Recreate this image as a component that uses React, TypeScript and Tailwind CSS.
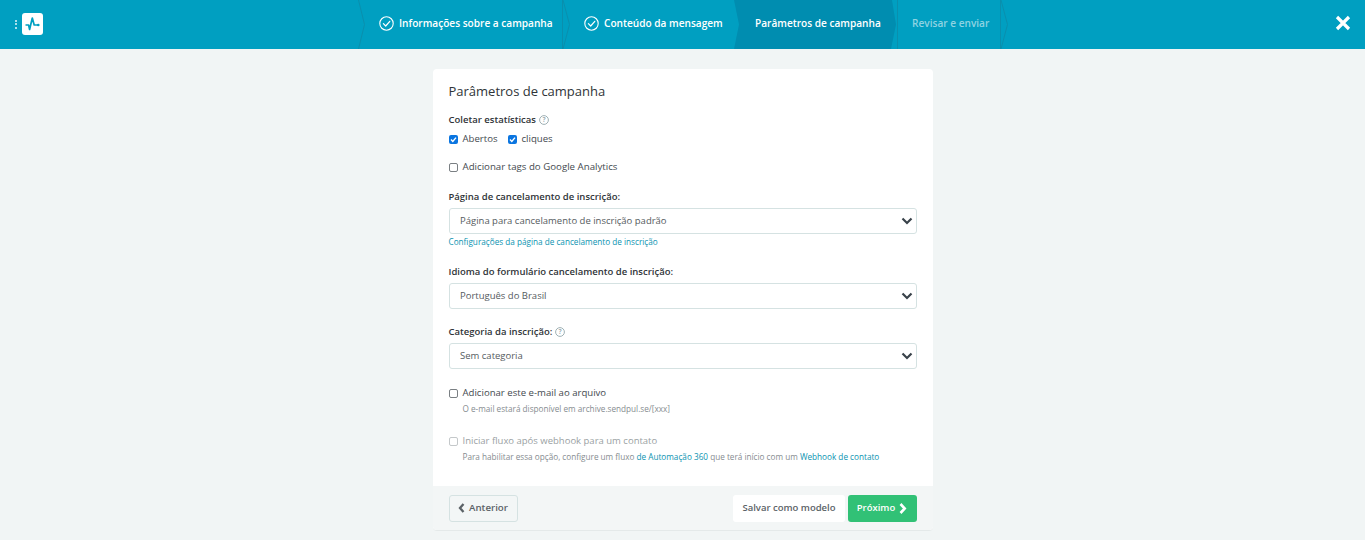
import React from "react";

const font = { fontFamily: '"Open Sans", "Noto Sans", sans-serif' };

function Check() {
  return (
    <svg width="15" height="15" viewBox="0 0 15 15" fill="none" className="shrink-0">
      <circle cx="7.5" cy="7.5" r="6.7" stroke="white" strokeWidth="1.1" />
      <path d="M4.4 7.7 6.7 10 10.8 5.3" stroke="white" strokeWidth="1.2" strokeLinecap="round" strokeLinejoin="round" />
    </svg>
  );
}

function Sep() {
  return (
    <svg width="9" height="49" viewBox="0 0 9 49" fill="none" className="absolute top-0 left-full">
      <path d="M0.5 0V49" stroke="#0a8fad" />
      <path d="M1 0 7.5 24.5 1 49" stroke="#0a8fad" />
    </svg>
  );
}

function Help() {
  return (
    <svg width="10" height="10" viewBox="0 0 10 10" fill="none" className="inline-block ml-[3px] align-[-2px]">
      <circle cx="5" cy="5" r="4.4" stroke="#9fb0b4" strokeWidth="1" />
      <text x="5" y="7.4" textAnchor="middle" fontSize="6.5" fontWeight="700" fill="#9fb0b4" fontFamily="Open Sans">?</text>
    </svg>
  );
}

function Box({ checked, disabled }: { checked?: boolean; disabled?: boolean }) {
  if (checked) {
    return (
      <span className="w-[9px] h-[9px] rounded-[2px] bg-[#0a75e0] flex items-center justify-center shrink-0">
        <svg width="9" height="9" viewBox="0 0 9 9" fill="none">
          <path d="M2 4.6 3.8 6.4 7 2.6" stroke="white" strokeWidth="1.4" />
        </svg>
      </span>
    );
  }
  return (
    <span
      className={
        disabled
          ? "w-[9px] h-[9px] rounded-[2px] border border-[#c4c8ca] bg-white shrink-0"
          : "w-[9px] h-[9px] rounded-[2px] border border-[#7a7f83] bg-white shrink-0"
      }
    />
  );
}

function Select({ value }: { value: string }) {
  return (
    <div className="h-[26px] border border-[#d5e2e2] rounded-[3px] bg-white flex items-center justify-between pl-[10.5px] pr-[3px] text-[9.5px] text-[#555b60]">
      <span>{value}</span>
      <svg width="12" height="8" viewBox="0 0 12 8" fill="none">
        <path d="M1.5 1.5 6 6 10.5 1.5" stroke="#39424a" strokeWidth="2.2" />
      </svg>
    </div>
  );
}

function Label({ children }: { children: React.ReactNode }) {
  return <div className="text-[9.5px] font-semibold text-[#2f3438] leading-[12px]">{children}</div>;
}

export default function App() {
  return (
    <div style={font} className="w-[1365px] h-[540px] bg-[#f1f5f5] overflow-hidden flex flex-col">
      <header className="h-[49px] shrink-0 bg-[#009fc1] grid grid-cols-[1fr_auto_1fr] items-stretch">
        <div className="flex items-center pl-[15px] gap-[5px] pb-[1px]">
          <span className="flex flex-col gap-[1.5px]">
            <span className="w-[2px] h-[2px] bg-[#a8e0ec]" />
            <span className="w-[2px] h-[2px] bg-[#a8e0ec]" />
            <span className="w-[2px] h-[2px] bg-[#a8e0ec]" />
          </span>
          <span className="w-[21px] h-[22px] rounded-[3px] bg-white flex items-center justify-center">
            <svg width="15" height="14" viewBox="0 0 15 14" fill="none">
              <path d="M0.5 8H3.6L4.6 12.5 7.3 1 9.2 8H14" stroke="#009fc1" strokeWidth="1.7" strokeLinejoin="round" />
              <circle cx="13.3" cy="8" r="1.3" fill="#009fc1" />
            </svg>
          </span>
        </div>
        <nav className="flex text-[10.1px] font-semibold text-white">
          <div className="relative w-[197px] h-[49px] flex items-center pl-[14px] pb-[2px] gap-[5px]">
            <Check />
            <span>Informações sobre a campanha</span>
            <Sep />
            <svg width="7" height="49" viewBox="0 0 7 49" fill="none" className="absolute top-0 -left-[7px]">
              <path d="M0.5 0 6.5 24.5 0.5 49" stroke="#0a8fad" />
            </svg>
          </div>
          <div className="relative w-[172px] h-[49px] flex items-center pl-[22px] pb-[2px] gap-[5px]">
            <Check />
            <span>Conteúdo da mensagem</span>
          </div>
          <div className="relative w-[163px] h-[49px] flex items-center pl-[21px] pb-[2px] bg-[#008db0] [clip-path:polygon(0_0,158px_0,162px_50%,157px_100%,0_100%,5px_50%)]">
            <span>Parâmetros de campanha</span>
          </div>
          <div className="relative w-[103px] h-[49px] flex items-center pl-[14px] pb-[2px] text-[#8fd3e2] border-l border-[#0a8fad]">
            <span>Revisar e enviar</span>
            <Sep />
          </div>
        </nav>
        <div className="flex items-center justify-end pr-[14px] pb-[3px]">
          <svg width="16" height="16" viewBox="0 0 16 16" fill="none">
            <path d="M2 2 14 14M14 2 2 14" stroke="white" strokeWidth="3.2" />
          </svg>
        </div>
      </header>

      <main className="flex-1 flex justify-center pt-[20px]">
        <div className="w-[500px] h-[462px] bg-white rounded-[4px] border-b border-[#e4e9e9] flex flex-col">
          <div className="flex-1 px-[16px] pt-[13px]">
            <h1 className="text-[13px] font-medium text-[#2f3438] leading-[18px]">Parâmetros de campanha</h1>

            <div className="mt-[14px]">
              <Label>
                Coletar estatísticas
                <Help />
              </Label>
            </div>
            <div className="mt-[7px] flex items-center text-[9.6px] text-[#444a4f] leading-[12px]">
              <Box checked />
              <span className="ml-[5px]">Abertos</span>
              <span className="ml-[10px]"><Box checked /></span>
              <span className="ml-[5px]">cliques</span>
            </div>
            <div className="mt-[16px] flex items-center text-[9.7px] text-[#444a4f] leading-[12px]">
              <Box />
              <span className="ml-[5px]">Adicionar tags do Google Analytics</span>
            </div>

            <div className="mt-[18px]"><Label>Página de cancelamento de inscrição:</Label></div>
            <div className="mt-[5px]"><Select value="Página para cancelamento de inscrição padrão" /></div>
            <a className="block mt-[2px] text-[8.2px] leading-[12px] text-[#0b93b1]">Configurações da página de cancelamento de inscrição</a>

            <div className="mt-[18px]"><Label>Idioma do formulário cancelamento de inscrição:</Label></div>
            <div className="mt-[5px]"><Select value="Português do Brasil" /></div>

            <div className="mt-[17px]">
              <Label>
                Categoria da inscrição:
                <Help />
              </Label>
            </div>
            <div className="mt-[5px]"><Select value="Sem categoria" /></div>

            <div className="mt-[18px] flex items-center text-[9.6px] text-[#444a4f] leading-[12px]">
              <Box />
              <span className="ml-[5px]">Adicionar este e-mail ao arquivo</span>
            </div>
            <div className="mt-[4px] ml-[14px] text-[8.2px] leading-[12px] text-[#868c90]">
              O e-mail estará disponível em archive.sendpul.se/[xxx]
            </div>

            <div className="mt-[20px] flex items-center text-[9.5px] text-[#9a9fa3] leading-[12px]">
              <Box disabled />
              <span className="ml-[5px]">Iniciar fluxo após webhook para um contato</span>
            </div>
            <div className="mt-[4px] ml-[14px] text-[8.2px] leading-[12px] text-[#868c90]">
              Para habilitar essa opção, configure um fluxo <span className="text-[#0b93b1]">de Automação 360</span> que terá início com um <span className="text-[#0b93b1]">Webhook de contato</span>
            </div>
          </div>

          <footer className="h-[44px] shrink-0 bg-[#f3f6f6] rounded-b-[4px] flex items-center justify-between px-[16px]">
            <button className="h-[27px] w-[69px] border border-[#d5e2e2] rounded-[3px] flex items-center justify-center gap-[4px] text-[9.7px] font-semibold text-[#5b6267]">
              <svg width="7" height="10" viewBox="0 0 7 10" fill="none">
                <path d="M5.5 1 2 5 5.5 9" stroke="#5b6267" strokeWidth="2.3" />
              </svg>
              Anterior
            </button>
            <div className="flex gap-[3px]">
              <button className="h-[27px] w-[112px] bg-white rounded-[3px] pl-[1px] text-[9.5px] font-semibold text-[#5b6267]">Salvar como modelo</button>
              <button className="h-[27px] w-[69px] bg-[#31c176] rounded-[3px] flex items-center justify-center gap-[4px] text-[9.5px] font-semibold text-white">
                Próximo
                <svg width="8" height="11" viewBox="0 0 8 11" fill="none">
                  <path d="M1.5 1 5.7 5.5 1.5 10" stroke="white" strokeWidth="2.6" />
                </svg>
              </button>
            </div>
          </footer>
        </div>
      </main>
    </div>
  );
}
